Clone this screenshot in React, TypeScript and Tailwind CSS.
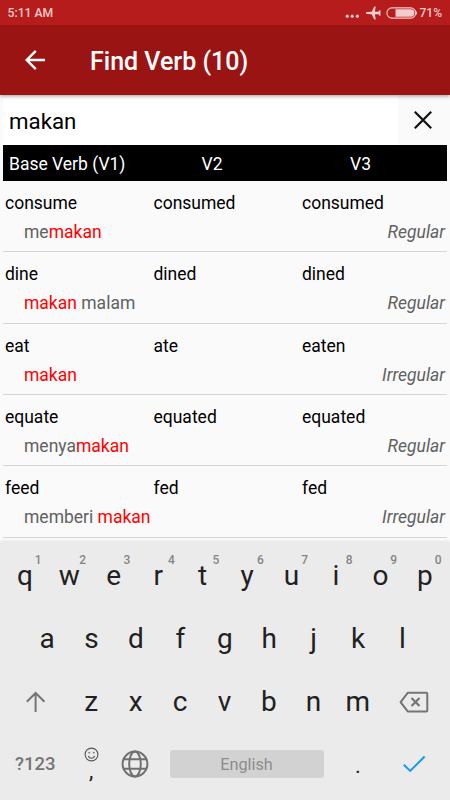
import React from "react";

type Verb = {
  forms: [string, string, string];
  meaning: [string, string, string];
  kind: string;
};

const verbs: Verb[] = [
  { forms: ["consume", "consumed", "consumed"], meaning: ["me", "makan", ""], kind: "Regular" },
  { forms: ["dine", "dined", "dined"], meaning: ["", "makan", " malam"], kind: "Regular" },
  { forms: ["eat", "ate", "eaten"], meaning: ["", "makan", ""], kind: "Irregular" },
  { forms: ["equate", "equated", "equated"], meaning: ["menya", "makan", ""], kind: "Regular" },
  { forms: ["feed", "fed", "fed"], meaning: ["memberi ", "makan", ""], kind: "Irregular" },
];

function StatusBar() {
  return (
    <div className="flex h-[25px] items-center bg-[#b71c1c] pl-[7.5px] pr-[8px] text-[12.2px] font-medium text-[#f3cccc]">
      <span className="grow pt-[2px]">5:11 AM</span>
      <svg width="15" height="25" viewBox="0 0 15 25" fill="#f3cccc">
        <circle cx="2.2" cy="16.2" r="1.6" />
        <circle cx="7.2" cy="16.2" r="1.6" />
        <circle cx="12.4" cy="16.2" r="1.6" />
      </svg>
      <svg className="ml-[6px]" width="15" height="14" viewBox="0 0 15 14" fill="#f3cccc">
        <path d="M.8 6.1 5.7 5.8 8.2.6h1.5L8.9 5.8h3.5l1.1-1.6h1v5.6h-1l-1.1-1.6H8.9l.8 5.2H8.2L5.7 8.2.8 7.9a.9.9 0 0 1 0-1.8Z" />
      </svg>
      <svg className="ml-[5px]" width="31" height="12" viewBox="0 0 31 12">
        <rect x=".9" y=".9" width="28.8" height="10.2" rx="5" fill="none" stroke="#f3cccc" strokeWidth="1.1" />
        <path d="M9.5 2.3h15.2a3.7 3.7 0 0 1 0 7.4H9.5Z" fill="#f3cccc" />
        <path d="M30.4 4.5v3" stroke="#f3cccc" strokeWidth="1" />
      </svg>
      <span className="ml-[3px] text-[12px]">71%</span>
    </div>
  );
}

function VerbRow({ verb }: { verb: Verb }) {
  return (
    <div className="mx-[3px] h-[71.33px] border-b border-[#d5d5d5] pl-[2px] pt-[8px] text-[17.5px]">
      <div className="grid grid-cols-[148.5px_148.5px_1fr] leading-[28px] text-black">
        {verb.forms.map((form, i) => (
          <span key={i}>{form}</span>
        ))}
      </div>
      <div className="flex justify-between pl-[19px] pr-[2px] leading-[30px] text-[#616161]">
        <span className="whitespace-pre">
          {verb.meaning[0]}
          <span className="text-[#ff0000]">{verb.meaning[1]}</span>
          {verb.meaning[2]}
        </span>
        <span className="italic">{verb.kind}</span>
      </div>
    </div>
  );
}

function Key({ label, hint }: { label: string; hint?: string }) {
  return (
    <div className="relative w-[44.45px] text-center text-[28px] leading-[63px] text-[#212121]">
      {label}
      {hint && (
        <span className="absolute left-[32px] top-[9px] text-[12px] font-medium leading-[14px] text-[#858585]">{hint}</span>
      )}
    </div>
  );
}

function Keyboard() {
  return (
    <div className="h-[258px] shrink-0 bg-[#ebebeb] pt-[2px] shadow-[0_-1px_3px_#e4e4e4]">
      <div className="flex h-[63px] pl-[2.7px]">
        {"qwertyuiop".split("").map((c, i) => (
          <Key key={c} label={c} hint={String((i + 1) % 10)} />
        ))}
      </div>
      <div className="flex h-[63px] pl-[24.8px]">
        {"asdfghjkl".split("").map((c) => (
          <Key key={c} label={c} />
        ))}
      </div>
      <div className="flex h-[63px] items-center">
        <div className="flex w-[69px] pl-[25px]">
          <svg width="21" height="22" viewBox="0 0 21 22" fill="none" stroke="#757575" strokeWidth="2">
            <path d="M10.6 21V2M1.8 10.8 10.6 2l8.8 8.8" />
          </svg>
        </div>
        {"zxcvbnm".split("").map((c) => (
          <Key key={c} label={c} />
        ))}
        <svg className="ml-[18.5px]" width="31" height="22" viewBox="0 0 31 22" fill="none" stroke="#757575" strokeWidth="2">
          <path d="M8.7 1.8h18.6q1 0 1 1v16.6q0 1-1 1H8.7L1.6 11.1Z" strokeLinejoin="round" />
          <path d="m12.5 7 8 8M20.5 7l-8 8" strokeWidth="2.2" />
        </svg>
      </div>
      <div className="flex h-[63px] items-center">
        <span className="w-[69px] pl-[15px] pt-[1px] text-[18.5px] font-medium text-[#757575]">?123</span>
        <div className="flex h-full w-[44.5px] flex-col items-center pt-[13.5px]">
          <svg width="15" height="15" viewBox="0 0 15 15" fill="none" stroke="#555" strokeWidth="1.1">
            <circle cx="7.5" cy="7.5" r="6.4" />
            <path d="M4.3 9a3.4 3.4 0 0 0 6.4 0" />
            <circle cx="5.2" cy="5.7" r=".5" fill="#555" strokeWidth=".6" />
            <circle cx="9.8" cy="5.7" r=".5" fill="#555" strokeWidth=".6" />
          </svg>
          <span className="-mt-[2px] text-[22px] leading-[22px] text-[#212121]">,</span>
        </div>
        <div className="flex w-[56px] pl-[7.8px]">
          <svg className="-mt-[2px]" width="28" height="28" viewBox="0 0 28 28" fill="none" stroke="#707070" strokeWidth="2">
            <circle cx="14" cy="14" r="12.4" />
            <ellipse cx="14" cy="14" rx="5.8" ry="12.4" />
            <path d="M2.8 9.3h22.4M2.8 18.7h22.4" />
          </svg>
        </div>
        <div className="-mt-[2px] h-[28px] w-[154px] rounded-[3px] bg-[#d2d2d2] text-center text-[16.3px] leading-[29px] text-[#8c8c8c]">English</div>
        <span className="w-[69px] pt-[2px] text-center text-[22px] text-[#212121]">.</span>
        <svg className="-mt-[2px] ml-[9px]" width="24" height="18" viewBox="0 0 24 18" fill="none" stroke="#1e9be9" strokeWidth="2.1">
          <path d="m1.8 9.7 6.4 6.2L22.6 1.6" />
        </svg>
      </div>
    </div>
  );
}

export default function App() {
  return (
    <div className="flex h-[800px] w-[450px] flex-col overflow-hidden bg-[#fafafa] font-[Roboto,sans-serif]">
      <header className="relative z-10 shrink-0 shadow-[0_1px_4px_rgba(0,0,0,0.4)]">
        <StatusBar />
        <div className="flex h-[70px] items-center bg-[#9b1414] pl-[25px]">
          <svg width="20" height="20" viewBox="0 0 20 20" fill="none" stroke="#fff" strokeWidth="2.4">
            <path d="M20 10H1.8M10.8.9 1.7 10l9.1 9.1" />
          </svg>
          <h1 className="ml-[45px] pt-[3px] text-[25px] font-medium text-white">Find Verb (10)</h1>
        </div>
      </header>
      <div className="flex h-[50px] shrink-0 pl-[3px]">
        <div className="w-[395px] bg-white pl-[6px] text-[22.3px] leading-[52px] text-black">makan</div>
        <div className="flex grow items-center pl-[15.5px]">
          <svg width="18" height="18" viewBox="0 0 18 18" fill="none" stroke="#111" strokeWidth="2.2">
            <path d="m.8.8 16.4 16.4M17.2.8.8 17.2" />
          </svg>
        </div>
      </div>
      <div className="mx-[3px] flex h-[36px] shrink-0 bg-black text-[17.5px] leading-[38px] text-white">
        <span className="w-[135px] pl-[6px]">Base Verb (V1)</span>
        <span className="w-[148px] text-center">V2</span>
        <span className="w-[149px] text-center">V3</span>
      </div>
      <div className="h-[361px] shrink-0 overflow-hidden">
        {verbs.map((v) => (
          <VerbRow key={v.forms[0]} verb={v} />
        ))}
      </div>
      <Keyboard />
    </div>
  );
}
